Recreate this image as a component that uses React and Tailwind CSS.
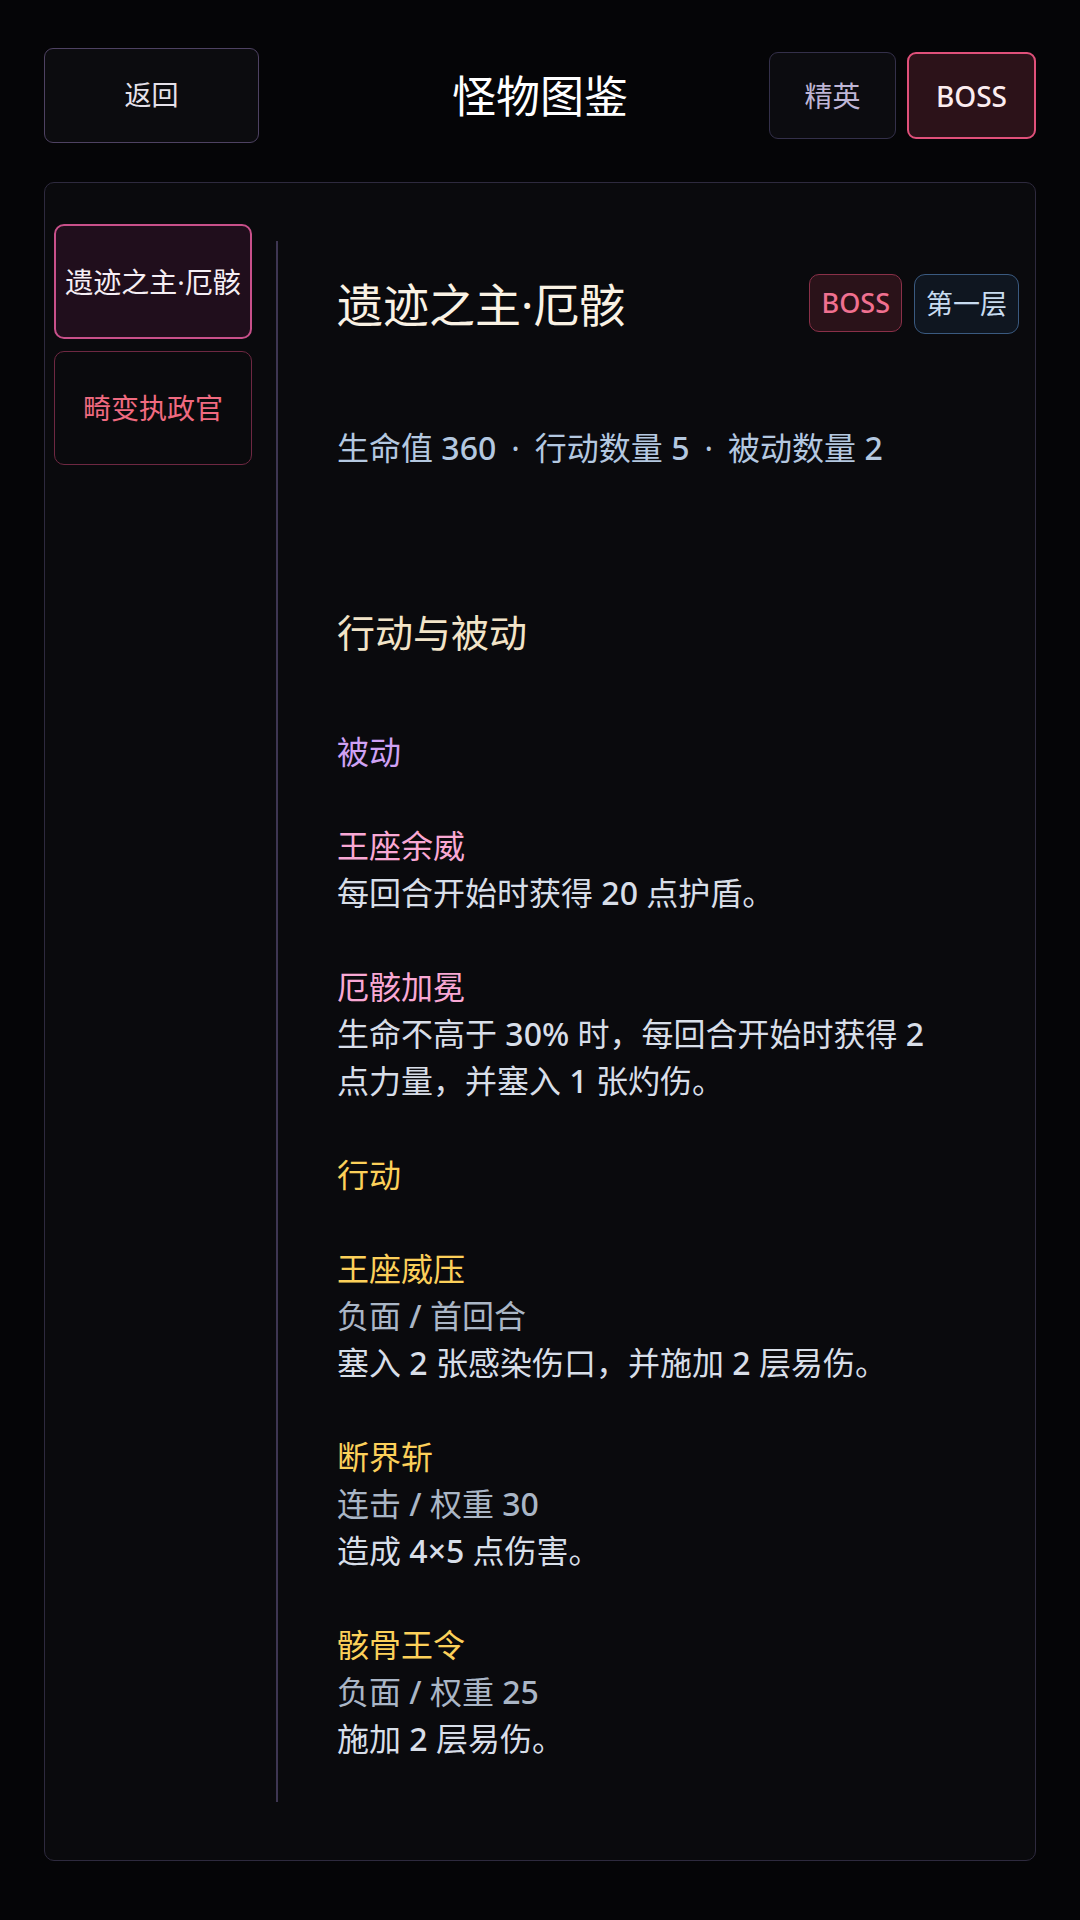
import { useState } from "react";

const FONT = {
  fontFamily: '"Noto Sans", "Noto Sans CJK SC", sans-serif',
};

const MONSTERS = [
  { id: "ruin-lord", name: "遗迹之主·厄骸" },
  { id: "mutant", name: "畸变执政官" },
];

const PASSIVES = [
  { name: "王座余威", desc: ["每回合开始时获得 20 点护盾。"] },
  {
    name: "厄骸加冕",
    desc: ["生命不高于 30% 时，每回合开始时获得 2 点力量，并塞入 1 张灼伤。"],
  },
];

const ACTIONS = [
  { name: "王座威压", meta: "负面 / 首回合", desc: "塞入 2 张感染伤口，并施加 2 层易伤。" },
  { name: "断界斩", meta: "连击 / 权重 30", desc: "造成 4×5 点伤害。" },
  { name: "骸骨王令", meta: "负面 / 权重 25", desc: "施加 2 层易伤。" },
];

// latin runs render a touch heavier than the CJK around them
function Txt({ text }) {
  return text.split(/([A-Za-z0-9%×/]+)/).map((part, i) =>
    i % 2 === 1 ? (
      <span key={i} className="font-medium">
        {part}
      </span>
    ) : (
      part
    )
  );
}

export default function App() {
  const [tier, setTier] = useState("boss");
  const [selected, setSelected] = useState("ruin-lord");

  return (
    <div
      className="min-h-screen flex flex-col bg-[#050507] px-11 pt-12 pb-[59px]"
      style={FONT}
    >
      {/* header */}
      <header className="grid grid-cols-[1fr_auto_1fr] items-center">
        <button className="w-[215px] h-[95px] rounded-[9px] border border-[#4e4262] bg-[#0c0c0f] text-[27px] text-[#e6e2ea]">
          返回
        </button>
        <h1 className="text-[44px] text-white leading-none">怪物图鉴</h1>
        <div className="flex justify-end gap-[11px]">
          <button
            onClick={() => setTier("elite")}
            className={
              tier === "elite"
                ? "w-[127px] h-[87px] rounded-[9px] border-2 border-[#e0507a] bg-[#2c1219] text-[28px] text-[#fbecef]"
                : "w-[127px] h-[87px] rounded-[9px] border border-[#34304a] bg-[#0c0c10] text-[28px] text-[#bfb6d6]"
            }
          >
            精英
          </button>
          <button
            onClick={() => setTier("boss")}
            className={
              tier === "boss"
                ? "w-[129px] h-[87px] rounded-[9px] border-2 border-[#e0507a] bg-[#2c1219] text-[28px] font-medium text-[#fbecef]"
                : "w-[129px] h-[87px] rounded-[9px] border border-[#34304a] bg-[#0c0c10] text-[28px] font-medium text-[#bfb6d6]"
            }
          >
            BOSS
          </button>
        </div>
      </header>

      {/* card */}
      <section className="mt-[39px] flex-1 flex rounded-[10px] border border-[#2e2a3e] bg-[#0a0a0d] pl-[9px] pr-4 py-[41px]">
        <aside className="w-[198px] flex flex-col gap-3 shrink-0">
          {MONSTERS.map((m) =>
            m.id === selected ? (
              <button
                key={m.id}
                onClick={() => setSelected(m.id)}
                className="h-[115px] rounded-[10px] border-2 border-[#c8508a] bg-[#200e1c] text-[28px] text-[#f6eef4]"
              >
                {m.name}
              </button>
            ) : (
              <button
                key={m.id}
                onClick={() => setSelected(m.id)}
                className="h-[114px] rounded-[10px] border border-[#6e2842] bg-[#0a0a0d] text-[28px] text-[#f06a80]"
              >
                {m.name}
              </button>
            )
          )}
        </aside>

        <div className="ml-6 my-[17px] flex-1 border-l-2 border-[#3e3652] pl-[59px] pt-[33px]">
          <div className="flex items-center justify-between">
            <h2 className="text-[46px] leading-none text-[#faf2e4]">遗迹之主·厄骸</h2>
            <div className="flex gap-3">
              <span className="h-[58px] px-[11px] flex items-center rounded-[10px] border border-[#8a3048] bg-[#2a1219] text-[27px] font-medium text-[#f07090]">
                BOSS
              </span>
              <span className="h-[60px] px-[11px] flex items-center rounded-[11px] border border-[#3a5a80] bg-[#0f1620] text-[27px] text-[#c8dcf0]">
                第一层
              </span>
            </div>
          </div>

          <p className="mt-[90px] text-[32px] leading-[47px] text-[#b4c8e0]">
            <Txt text="生命值 360" />
            <span className="mx-[15px]">·</span>
            <Txt text="行动数量 5" />
            <span className="mx-[15px]">·</span>
            <Txt text="被动数量 2" />
          </p>

          <h3 className="mt-[136px] text-[38px] leading-[50px] text-[#f2e4c8]">
            行动与被动
          </h3>

          <div className="mt-[71px] max-w-[605px] text-[32px] leading-[47px]">
            <div className="text-[#cfa2f4]">被动</div>
            {PASSIVES.map((p) => (
              <div key={p.name} className="mt-[47px]">
                <div className="text-[#f9a8d4]">{p.name}</div>
                {p.desc.map((d) => (
                  <div key={d} className="text-[#d8dee8]">
                    <Txt text={d} />
                  </div>
                ))}
              </div>
            ))}

            <div className="mt-[47px] text-[#fcd05a]">行动</div>
            {ACTIONS.map((a) => (
              <div key={a.name} className="mt-[47px]">
                <div className="text-[#fcd05a]">{a.name}</div>
                <div className="text-[#aab6c6]">
                  <Txt text={a.meta} />
                </div>
                <div className="text-[#d8dee8]">
                  <Txt text={a.desc} />
                </div>
              </div>
            ))}
          </div>
        </div>
      </section>
    </div>
  );
}
